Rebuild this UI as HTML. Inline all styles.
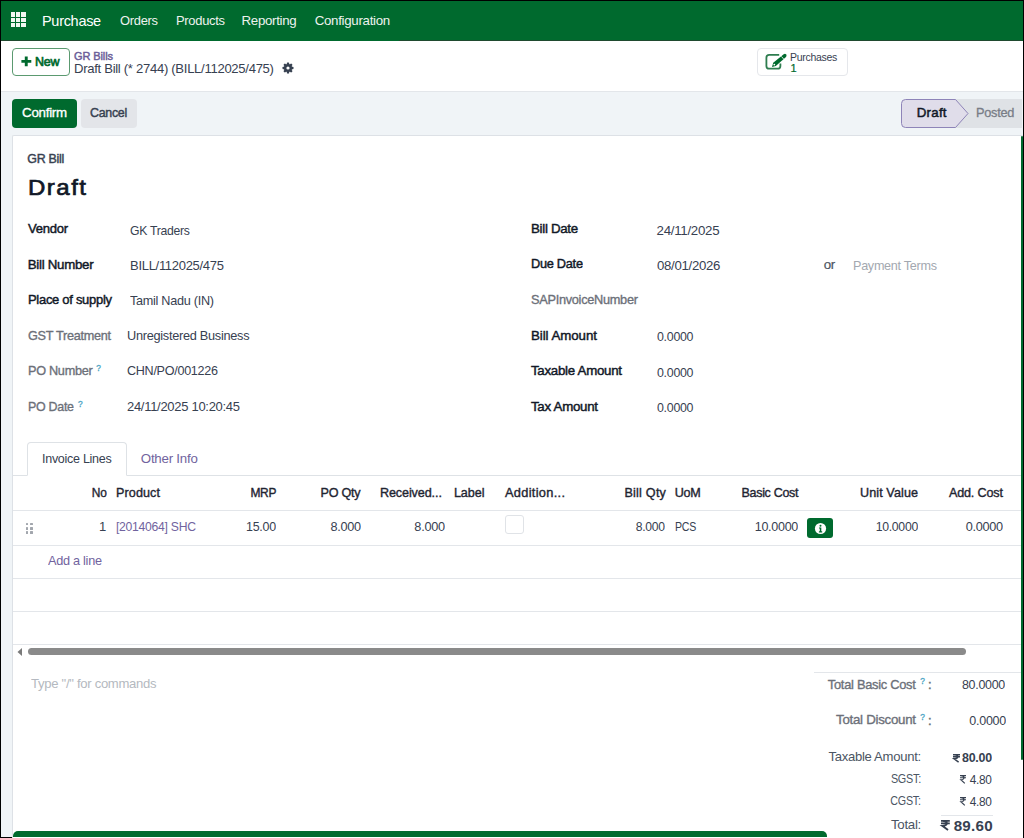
<!DOCTYPE html>
<html><head><meta charset="utf-8"><title>Purchase</title>
<style>
html,body{margin:0;padding:0;width:1024px;height:838px;overflow:hidden;background:#000}
body{position:relative;font-family:"Liberation Sans",sans-serif}
.b{position:absolute;display:block}
.t{position:absolute;white-space:nowrap;line-height:20px;height:20px}
</style></head><body>
<div class="b" style="left:0.00px;top:0.00px;width:1024.00px;height:838.00px;background:#000"></div>
<div class="b" style="left:1.00px;top:1.00px;width:1022.00px;height:836.00px;background:#f0f4f7"></div>
<div class="b" style="left:1.00px;top:1.00px;width:1022.00px;height:40.00px;background:#006a2e"></div>
<div class="b" style="left:1.00px;top:40.00px;width:110.00px;height:1.00px;background:#1f4a2f"></div>
<div class="b" style="left:399.00px;top:40.00px;width:623.00px;height:1.00px;background:#1f4a2f"></div>
<div class="b" style="left:10.60px;top:12.20px;width:4.50px;height:4.50px;background:#f2f6f2"></div>
<div class="b" style="left:10.60px;top:17.50px;width:4.50px;height:4.50px;background:#f2f6f2"></div>
<div class="b" style="left:10.60px;top:22.80px;width:4.50px;height:4.50px;background:#f2f6f2"></div>
<div class="b" style="left:15.90px;top:12.20px;width:4.50px;height:4.50px;background:#f2f6f2"></div>
<div class="b" style="left:15.90px;top:17.50px;width:4.50px;height:4.50px;background:#f2f6f2"></div>
<div class="b" style="left:15.90px;top:22.80px;width:4.50px;height:4.50px;background:#f2f6f2"></div>
<div class="b" style="left:21.20px;top:12.20px;width:4.50px;height:4.50px;background:#f2f6f2"></div>
<div class="b" style="left:21.20px;top:17.50px;width:4.50px;height:4.50px;background:#f2f6f2"></div>
<div class="b" style="left:21.20px;top:22.80px;width:4.50px;height:4.50px;background:#f2f6f2"></div>
<div class="t" style="left:42.00px;top:11.08px;font-size:14.50px;font-weight:normal;color:#ffffff;letter-spacing:-0.300px;">Purchase</div>
<div class="t" style="left:120.20px;top:11.19px;font-size:13.30px;font-weight:normal;color:#eef2ef;letter-spacing:-0.300px;transform:scaleX(0.9707);transform-origin:left;">Orders</div>
<div class="t" style="left:175.50px;top:11.19px;font-size:13.30px;font-weight:normal;color:#eef2ef;letter-spacing:-0.300px;transform:scaleX(0.9725);transform-origin:left;">Products</div>
<div class="t" style="left:241.50px;top:11.19px;font-size:13.30px;font-weight:normal;color:#eef2ef;letter-spacing:-0.300px;">Reporting</div>
<div class="t" style="left:314.70px;top:11.19px;font-size:13.30px;font-weight:normal;color:#eef2ef;letter-spacing:-0.293px;">Configuration</div>
<div class="b" style="left:1.00px;top:41.00px;width:1022.00px;height:50.00px;background:#fff"></div>
<div class="b" style="left:1.00px;top:91.00px;width:1022.00px;height:1.00px;background:#e3e6ea"></div>
<div class="b" style="left:12.00px;top:48.00px;width:58.00px;height:28.00px;border:1px solid #5b9a70;border-radius:4px;box-sizing:border-box;background:#fff"></div>
<svg class="b" style="left:21px;top:56px" width="11" height="12" viewBox="0 0 11 12"><path d="M3.8 0.6h2.9v3.4h3.6v2.8H6.7V10.3H3.8V6.8H0.4V4H3.8z" fill="#006a2e"/></svg>
<div class="t" style="left:35.40px;top:51.59px;font-size:13.30px;font-weight:normal;color:#006a2e;letter-spacing:-0.300px;-webkit-text-stroke:0.70px #006a2e;transform:scaleX(0.9382);transform-origin:left;">New</div>
<div class="t" style="left:74.00px;top:45.69px;font-size:11.00px;font-weight:normal;color:#6b5d98;letter-spacing:-0.104px;-webkit-text-stroke:0.45px #6b5d98;">GR Bills</div>
<div class="t" style="left:74.00px;top:59.19px;font-size:13.30px;font-weight:normal;color:#374151;letter-spacing:-0.300px;transform:scaleX(0.9835);transform-origin:left;">Draft Bill (* 2744) (BILL/112025/475)</div>
<svg class="b" style="left:281.6px;top:62.4px" width="12" height="12" viewBox="-6 -6 12 12">
<g fill="#374151"><circle r="4.1"/><rect x="-1.15" y="-5.5" width="2.3" height="2.6" rx="0.6" transform="rotate(0)"/><rect x="-1.15" y="-5.5" width="2.3" height="2.6" rx="0.6" transform="rotate(45)"/><rect x="-1.15" y="-5.5" width="2.3" height="2.6" rx="0.6" transform="rotate(90)"/><rect x="-1.15" y="-5.5" width="2.3" height="2.6" rx="0.6" transform="rotate(135)"/><rect x="-1.15" y="-5.5" width="2.3" height="2.6" rx="0.6" transform="rotate(180)"/><rect x="-1.15" y="-5.5" width="2.3" height="2.6" rx="0.6" transform="rotate(225)"/><rect x="-1.15" y="-5.5" width="2.3" height="2.6" rx="0.6" transform="rotate(270)"/><rect x="-1.15" y="-5.5" width="2.3" height="2.6" rx="0.6" transform="rotate(315)"/></g><circle r="1.6" fill="#fff"/></svg>
<div class="b" style="left:757.00px;top:48.00px;width:91.00px;height:28.00px;border:1px solid #e5e7eb;border-radius:4px;box-sizing:border-box;background:#fff"></div>
<svg class="b" style="left:765px;top:53px" width="22" height="18" viewBox="0 0 22 18">
<path d="M14.2 1.9H4.2A2.8 2.8 0 0 0 1.4 4.7v8.2A2.8 2.8 0 0 0 4.2 15.7h8.4A2.8 2.8 0 0 0 15.4 12.9V10.5" fill="none" stroke="#2e7d4f" stroke-width="1.8"/>
<path d="M7.0 14.0L8.2 9.7L18.7 1.3Q20.2 0.3 21.2 1.6Q22 2.9 21.0 4.0L10.8 12.9z" fill="#006a2e"/>
<path d="M16.4 3.4L18.9 6.3" stroke="#fff" stroke-width="0.8"/>
<circle cx="9.3" cy="11.6" r="0.9" fill="#fff"/></svg>
<div class="t" style="left:790.00px;top:47.36px;font-size:10.50px;font-weight:normal;color:#374151;letter-spacing:-0.300px;">Purchases</div>
<div class="t" style="left:790.50px;top:58.49px;font-size:11.00px;font-weight:normal;color:#006a2e;letter-spacing:0.000px;-webkit-text-stroke:0.20px #006a2e;">1</div>
<div class="b" style="left:12.00px;top:99.00px;width:65.00px;height:29.00px;background:#006a2e;border-radius:4px"></div>
<div class="t" style="left:22.10px;top:103.19px;font-size:13.30px;font-weight:normal;color:#fff;letter-spacing:-0.260px;-webkit-text-stroke:0.35px #fff;">Confirm</div>
<div class="b" style="left:81.00px;top:99.00px;width:56.00px;height:29.00px;background:#e3e5e9;border-radius:4px"></div>
<div class="t" style="left:90.20px;top:103.19px;font-size:13.30px;font-weight:normal;color:#374151;letter-spacing:-0.300px;-webkit-text-stroke:0.45px #374151;transform:scaleX(0.9323);transform-origin:left;">Cancel</div>
<div class="b" style="left:955.00px;top:99.00px;width:67.00px;height:29.00px;background:#dfe2e6"></div>
<svg class="b" style="left:900px;top:98px" width="72" height="31" viewBox="0 0 72 31">
<path d="M5.5 1.5H55.5L68 15.5L55.5 29.5H5.5A4 4 0 0 1 1.5 25.5V5.5A4 4 0 0 1 5.5 1.5z" fill="#e0ddea" stroke="#8e84b8" stroke-width="1"/></svg>
<div class="t" style="left:916.80px;top:103.19px;font-size:13.30px;font-weight:normal;color:#111827;letter-spacing:0.220px;-webkit-text-stroke:0.50px #111827;">Draft</div>
<div class="t" style="left:975.70px;top:103.19px;font-size:13.30px;font-weight:normal;color:#787d86;letter-spacing:-0.300px;-webkit-text-stroke:0.30px #787d86;transform:scaleX(0.9597);transform-origin:left;">Posted</div>
<div class="b" style="left:12.00px;top:135.00px;width:1011.00px;height:703.00px;background:#fff;border:1px solid #dde1e6;border-radius:2px 0 0 0;box-sizing:border-box;border-bottom:none;border-right:none"></div>
<div class="b" style="left:1021.00px;top:136.00px;width:2.00px;height:624.00px;background:#006a2e;border-radius:1px"></div>
<div class="t" style="left:27.30px;top:148.60px;font-size:12.40px;font-weight:normal;color:#374151;letter-spacing:-0.264px;-webkit-text-stroke:0.45px #374151;">GR Bill</div>
<div class="t" style="left:28.20px;top:177.80px;font-size:22.50px;font-weight:normal;color:#111827;letter-spacing:1.400px;-webkit-text-stroke:0.70px #111827;transform:scaleX(1.0670);transform-origin:left;">Draft</div>
<div class="t" style="left:27.70px;top:219.29px;font-size:13.30px;font-weight:normal;color:#111827;letter-spacing:-0.300px;-webkit-text-stroke:0.45px #111827;transform:scaleX(0.9839);transform-origin:left;">Vendor</div>
<div class="t" style="left:27.70px;top:254.89px;font-size:13.30px;font-weight:normal;color:#111827;letter-spacing:-0.274px;-webkit-text-stroke:0.45px #111827;">Bill Number</div>
<div class="t" style="left:27.70px;top:290.19px;font-size:13.30px;font-weight:normal;color:#111827;letter-spacing:-0.300px;-webkit-text-stroke:0.45px #111827;transform:scaleX(0.9768);transform-origin:left;">Place of supply</div>
<div class="t" style="left:27.50px;top:325.89px;font-size:13.30px;font-weight:normal;color:#6c7079;letter-spacing:-0.300px;-webkit-text-stroke:0.35px #6c7079;transform:scaleX(0.9532);transform-origin:left;">GST Treatment</div>
<div class="t" style="left:27.50px;top:360.99px;font-size:13.30px;font-weight:normal;color:#6c7079;letter-spacing:-0.300px;-webkit-text-stroke:0.35px #6c7079;transform:scaleX(0.9540);transform-origin:left;">PO Number</div>
<div class="t" style="left:27.50px;top:396.99px;font-size:13.30px;font-weight:normal;color:#6c7079;letter-spacing:-0.300px;-webkit-text-stroke:0.35px #6c7079;transform:scaleX(0.9349);transform-origin:left;">PO Date</div>
<div class="t" style="left:96.20px;top:358.02px;font-size:8.30px;font-weight:normal;color:#4aa5c4;letter-spacing:0.000px;-webkit-text-stroke:0.30px #4aa5c4;">?</div>
<div class="t" style="left:78.10px;top:394.02px;font-size:8.30px;font-weight:normal;color:#4aa5c4;letter-spacing:0.000px;-webkit-text-stroke:0.30px #4aa5c4;">?</div>
<div class="t" style="left:130.00px;top:220.89px;font-size:13.30px;font-weight:normal;color:#374151;letter-spacing:-0.300px;transform:scaleX(0.9188);transform-origin:left;">GK Traders</div>
<div class="t" style="left:130.00px;top:256.49px;font-size:13.30px;font-weight:normal;color:#374151;letter-spacing:-0.300px;transform:scaleX(0.9778);transform-origin:left;">BILL/112025/475</div>
<div class="t" style="left:130.00px;top:291.49px;font-size:13.30px;font-weight:normal;color:#374151;letter-spacing:-0.300px;transform:scaleX(0.9526);transform-origin:left;">Tamil Nadu (IN)</div>
<div class="t" style="left:126.60px;top:325.99px;font-size:13.30px;font-weight:normal;color:#374151;letter-spacing:-0.300px;transform:scaleX(0.9592);transform-origin:left;">Unregistered Business</div>
<div class="t" style="left:126.60px;top:361.29px;font-size:13.30px;font-weight:normal;color:#374151;letter-spacing:-0.300px;transform:scaleX(0.9459);transform-origin:left;">CHN/PO/001226</div>
<div class="t" style="left:126.60px;top:396.99px;font-size:13.30px;font-weight:normal;color:#374151;letter-spacing:-0.300px;transform:scaleX(0.9771);transform-origin:left;">24/11/2025 10:20:45</div>
<div class="t" style="left:531.00px;top:218.99px;font-size:13.30px;font-weight:normal;color:#111827;letter-spacing:-0.300px;-webkit-text-stroke:0.45px #111827;">Bill Date</div>
<div class="t" style="left:531.00px;top:254.39px;font-size:13.30px;font-weight:normal;color:#111827;letter-spacing:-0.300px;-webkit-text-stroke:0.45px #111827;transform:scaleX(0.9614);transform-origin:left;">Due Date</div>
<div class="t" style="left:531.00px;top:325.99px;font-size:13.30px;font-weight:normal;color:#111827;letter-spacing:-0.054px;-webkit-text-stroke:0.45px #111827;">Bill Amount</div>
<div class="t" style="left:531.00px;top:361.49px;font-size:13.30px;font-weight:normal;color:#111827;letter-spacing:-0.280px;-webkit-text-stroke:0.45px #111827;">Taxable Amount</div>
<div class="t" style="left:531.00px;top:396.99px;font-size:13.30px;font-weight:normal;color:#111827;letter-spacing:-0.277px;-webkit-text-stroke:0.45px #111827;">Tax Amount</div>
<div class="t" style="left:531.00px;top:289.99px;font-size:13.30px;font-weight:normal;color:#6c7079;letter-spacing:-0.300px;-webkit-text-stroke:0.35px #6c7079;transform:scaleX(0.9591);transform-origin:left;">SAPInvoiceNumber</div>
<div class="t" style="left:656.60px;top:220.89px;font-size:13.30px;font-weight:normal;color:#374151;letter-spacing:-0.287px;">24/11/2025</div>
<div class="t" style="left:656.60px;top:255.99px;font-size:13.30px;font-weight:normal;color:#374151;letter-spacing:-0.300px;transform:scaleX(0.9927);transform-origin:left;">08/01/2026</div>
<div class="t" style="left:656.60px;top:327.49px;font-size:13.30px;font-weight:normal;color:#374151;letter-spacing:-0.300px;transform:scaleX(0.9316);transform-origin:left;">0.0000</div>
<div class="t" style="left:656.60px;top:362.99px;font-size:13.30px;font-weight:normal;color:#374151;letter-spacing:-0.300px;transform:scaleX(0.9316);transform-origin:left;">0.0000</div>
<div class="t" style="left:656.60px;top:398.49px;font-size:13.30px;font-weight:normal;color:#374151;letter-spacing:-0.300px;transform:scaleX(0.9316);transform-origin:left;">0.0000</div>
<div class="t" style="left:823.75px;top:254.59px;font-size:13.30px;font-weight:normal;color:#4b5563;letter-spacing:-0.300px;-webkit-text-stroke:0.20px #4b5563;">or</div>
<div class="t" style="left:853.00px;top:256.29px;font-size:13.30px;font-weight:normal;color:#a3a8b0;letter-spacing:-0.300px;transform:scaleX(0.9486);transform-origin:left;">Payment Terms</div>
<div class="b" style="left:13.00px;top:475.00px;width:1008.00px;height:1.00px;background:#dee2e6"></div>
<div class="b" style="left:27.00px;top:442.00px;width:100.00px;height:34.00px;background:#fff;border:1px solid #dee2e6;border-bottom:1px solid #fff;border-radius:4px 4px 0 0;box-sizing:border-box"></div>
<div class="t" style="left:41.80px;top:449.09px;font-size:13.30px;font-weight:normal;color:#374151;letter-spacing:-0.300px;transform:scaleX(0.9415);transform-origin:left;">Invoice Lines</div>
<div class="t" style="left:140.80px;top:449.09px;font-size:13.30px;font-weight:normal;color:#71639e;letter-spacing:-0.238px;">Other Info</div>
<div class="t" style="right:917.88px;top:483.23px;font-size:12.60px;font-weight:normal;color:#1f2532;letter-spacing:-0.300px;-webkit-text-stroke:0.38px #1f2532;transform:scaleX(0.9489);transform-origin:right;">No</div>
<div class="t" style="left:116.00px;top:483.23px;font-size:12.60px;font-weight:normal;color:#1f2532;letter-spacing:0.096px;-webkit-text-stroke:0.38px #1f2532;">Product</div>
<div class="t" style="right:747.48px;top:483.23px;font-size:12.60px;font-weight:normal;color:#1f2532;letter-spacing:-0.300px;-webkit-text-stroke:0.38px #1f2532;transform:scaleX(0.9489);transform-origin:right;">MRP</div>
<div class="t" style="right:663.66px;top:483.23px;font-size:12.60px;font-weight:normal;color:#1f2532;letter-spacing:-0.261px;-webkit-text-stroke:0.38px #1f2532;">PO Qty</div>
<div class="t" style="right:582.20px;top:483.23px;font-size:12.60px;font-weight:normal;color:#1f2532;letter-spacing:-0.103px;-webkit-text-stroke:0.38px #1f2532;">Received...</div>
<div class="t" style="left:453.90px;top:483.23px;font-size:12.60px;font-weight:normal;color:#1f2532;letter-spacing:-0.033px;-webkit-text-stroke:0.38px #1f2532;">Label</div>
<div class="t" style="left:505.10px;top:483.23px;font-size:12.60px;font-weight:normal;color:#1f2532;letter-spacing:0.300px;-webkit-text-stroke:0.38px #1f2532;transform:scaleX(1.0163);transform-origin:left;">Addition...</div>
<div class="t" style="right:357.87px;top:483.23px;font-size:12.60px;font-weight:normal;color:#1f2532;letter-spacing:0.228px;-webkit-text-stroke:0.38px #1f2532;">Bill Qty</div>
<div class="t" style="left:674.70px;top:483.23px;font-size:12.60px;font-weight:normal;color:#1f2532;letter-spacing:-0.300px;-webkit-text-stroke:0.38px #1f2532;">UoM</div>
<div class="t" style="right:226.30px;top:483.23px;font-size:12.60px;font-weight:normal;color:#1f2532;letter-spacing:-0.300px;-webkit-text-stroke:0.38px #1f2532;transform:scaleX(0.9910);transform-origin:right;">Basic Cost</div>
<div class="t" style="right:105.91px;top:483.23px;font-size:12.60px;font-weight:normal;color:#1f2532;letter-spacing:0.089px;-webkit-text-stroke:0.38px #1f2532;">Unit Value</div>
<div class="t" style="right:21.27px;top:483.23px;font-size:12.60px;font-weight:normal;color:#1f2532;letter-spacing:-0.166px;-webkit-text-stroke:0.38px #1f2532;">Add. Cost</div>
<div class="b" style="left:13.00px;top:510.00px;width:1008.00px;height:1.00px;background:#e3e6ea"></div>
<div class="b" style="left:13.00px;top:545.00px;width:1008.00px;height:1.00px;background:#e3e6ea"></div>
<div class="b" style="left:13.00px;top:578.00px;width:1008.00px;height:1.00px;background:#e3e6ea"></div>
<div class="b" style="left:13.00px;top:611.00px;width:1008.00px;height:1.00px;background:#e3e6ea"></div>
<div class="b" style="left:13.00px;top:644.00px;width:1008.00px;height:1.00px;background:#e3e6ea"></div>
<div class="b" style="left:25.50px;top:522.50px;width:2.70px;height:2.70px;background:#a2a6ad;border-radius:0.5px"></div>
<div class="b" style="left:25.50px;top:526.90px;width:2.70px;height:2.70px;background:#a2a6ad;border-radius:0.5px"></div>
<div class="b" style="left:25.50px;top:531.30px;width:2.70px;height:2.70px;background:#a2a6ad;border-radius:0.5px"></div>
<div class="b" style="left:29.90px;top:522.50px;width:2.70px;height:2.70px;background:#a2a6ad;border-radius:0.5px"></div>
<div class="b" style="left:29.90px;top:526.90px;width:2.70px;height:2.70px;background:#a2a6ad;border-radius:0.5px"></div>
<div class="b" style="left:29.90px;top:531.30px;width:2.70px;height:2.70px;background:#a2a6ad;border-radius:0.5px"></div>
<div class="t" style="right:917.90px;top:517.10px;font-size:13.00px;font-weight:normal;color:#374151;letter-spacing:0.000px;">1</div>
<div class="t" style="left:116.10px;top:516.99px;font-size:13.30px;font-weight:normal;color:#71639e;letter-spacing:-0.300px;transform:scaleX(0.9159);transform-origin:left;">[2014064] SHC</div>
<div class="t" style="right:748.18px;top:516.99px;font-size:13.30px;font-weight:normal;color:#374151;letter-spacing:-0.300px;transform:scaleX(0.9351);transform-origin:right;">15.00</div>
<div class="t" style="right:663.69px;top:516.99px;font-size:13.30px;font-weight:normal;color:#374151;letter-spacing:-0.300px;transform:scaleX(0.9538);transform-origin:right;">8.000</div>
<div class="t" style="right:578.99px;top:516.99px;font-size:13.30px;font-weight:normal;color:#374151;letter-spacing:-0.300px;transform:scaleX(0.9569);transform-origin:right;">8.000</div>
<div class="t" style="right:358.87px;top:516.99px;font-size:13.30px;font-weight:normal;color:#374151;letter-spacing:-0.300px;transform:scaleX(0.9132);transform-origin:right;">8.000</div>
<div class="t" style="right:226.28px;top:516.99px;font-size:13.30px;font-weight:normal;color:#374151;letter-spacing:-0.300px;transform:scaleX(0.9400);transform-origin:right;">10.0000</div>
<div class="t" style="right:106.28px;top:516.99px;font-size:13.30px;font-weight:normal;color:#374151;letter-spacing:-0.300px;transform:scaleX(0.9205);transform-origin:right;">10.0000</div>
<div class="t" style="right:21.29px;top:516.99px;font-size:13.30px;font-weight:normal;color:#374151;letter-spacing:-0.300px;transform:scaleX(0.9546);transform-origin:right;">0.0000</div>
<div class="t" style="left:674.70px;top:516.99px;font-size:13.30px;font-weight:normal;color:#374151;letter-spacing:-0.300px;transform:scaleX(0.7963);transform-origin:left;">PCS</div>
<div class="b" style="left:505.00px;top:515.00px;width:19.00px;height:19.00px;border:1px solid #e0e3e7;border-radius:3px;box-sizing:border-box;background:#fff"></div>
<div class="b" style="left:807.00px;top:518.00px;width:26.00px;height:20.00px;background:#006a2e;border-radius:3px"></div>
<svg class="b" style="left:813.5px;top:521.5px" width="13" height="13" viewBox="0 0 13 13">
<circle cx="6.5" cy="6.5" r="5.6" fill="#fff"/><circle cx="6.5" cy="3.8" r="1.0" fill="#006a2e"/><path d="M5 5.4h2.3v3.9h0.9v1.1H4.9V9.3h0.9V6.5H5z" fill="#006a2e"/></svg>
<div class="t" style="left:47.70px;top:551.49px;font-size:13.30px;font-weight:normal;color:#71639e;letter-spacing:-0.300px;transform:scaleX(0.9565);transform-origin:left;">Add a line</div>
<svg class="b" style="left:16px;top:647px" width="8" height="10" viewBox="0 0 8 10"><path d="M6 1L1.5 5L6 9z" fill="#7a7a7a"/></svg>
<div class="b" style="left:28.40px;top:647.60px;width:937.40px;height:7.80px;background:#8a8a8a;border-radius:4px"></div>
<div class="t" style="left:30.60px;top:674.39px;font-size:13.30px;font-weight:normal;color:#b4b9c0;letter-spacing:-0.300px;transform:scaleX(0.9841);transform-origin:left;">Type &quot;/&quot; for commands</div>
<div class="b" style="left:813.60px;top:672.00px;width:207.00px;height:1.00px;background:#e3e6ea"></div>
<div class="t" style="right:108.29px;top:674.59px;font-size:13.30px;font-weight:normal;color:#6c7079;letter-spacing:-0.300px;-webkit-text-stroke:0.35px #6c7079;transform:scaleX(0.9686);transform-origin:right;">Total Basic Cost</div>
<div class="t" style="left:920.30px;top:670.72px;font-size:8.30px;font-weight:normal;color:#4aa5c4;letter-spacing:0.000px;-webkit-text-stroke:0.30px #4aa5c4;">?</div>
<div class="t" style="left:928.00px;top:674.70px;font-size:13.00px;font-weight:normal;color:#6c7079;letter-spacing:0.000px;-webkit-text-stroke:0.45px #6c7079;">:</div>
<div class="t" style="right:18.58px;top:674.99px;font-size:13.30px;font-weight:normal;color:#374151;letter-spacing:-0.300px;transform:scaleX(0.9357);transform-origin:right;">80.0000</div>
<div class="t" style="right:108.27px;top:710.49px;font-size:13.30px;font-weight:normal;color:#6c7079;letter-spacing:-0.272px;-webkit-text-stroke:0.35px #6c7079;">Total Discount</div>
<div class="t" style="left:920.30px;top:706.72px;font-size:8.30px;font-weight:normal;color:#4aa5c4;letter-spacing:0.000px;-webkit-text-stroke:0.30px #4aa5c4;">?</div>
<div class="t" style="left:928.00px;top:710.60px;font-size:13.00px;font-weight:normal;color:#6c7079;letter-spacing:0.000px;-webkit-text-stroke:0.45px #6c7079;">:</div>
<div class="t" style="right:18.58px;top:710.99px;font-size:13.30px;font-weight:normal;color:#374151;letter-spacing:-0.300px;transform:scaleX(0.9392);transform-origin:right;">0.0000</div>
<div class="t" style="right:103.00px;top:747.09px;font-size:13.30px;font-weight:normal;color:#4b5563;letter-spacing:-0.300px;transform:scaleX(0.9847);transform-origin:right;">Taxable Amount:</div>
<div class="t" style="right:102.94px;top:768.99px;font-size:13.30px;font-weight:normal;color:#4b5563;letter-spacing:-0.300px;transform:scaleX(0.8138);transform-origin:right;">SGST:</div>
<div class="t" style="right:102.94px;top:790.79px;font-size:13.30px;font-weight:normal;color:#4b5563;letter-spacing:-0.300px;transform:scaleX(0.8060);transform-origin:right;">CGST:</div>
<div class="t" style="right:103.00px;top:814.59px;font-size:13.30px;font-weight:normal;color:#4b5563;letter-spacing:-0.298px;">Total:</div>
<div class="t" style="right:31.98px;top:748.29px;font-size:13.30px;font-weight:bold;color:#374151;letter-spacing:-0.300px;transform:scaleX(0.9351);transform-origin:right;">80.00</div>
<svg class="b" style="left:952.60px;top:753.80px;overflow:visible" width="7.00" height="8.70" viewBox="0 0 7.000 8.700" preserveAspectRatio="none"><path d="M0 0.750H7.000M0 2.784H7.000M1.050 0.750C5.950 0.750 5.950 4.785 1.050 4.785L5.600 8.200" fill="none" stroke="#374151" stroke-width="1.50"/></svg>
<div class="t" style="right:31.97px;top:769.89px;font-size:13.30px;font-weight:normal;color:#374151;letter-spacing:-0.300px;transform:scaleX(0.8925);transform-origin:right;">4.80</div>
<svg class="b" style="left:960.20px;top:775.20px;overflow:visible" width="6.00" height="8.70" viewBox="0 0 6.000 8.700" preserveAspectRatio="none"><path d="M0 0.575H6.000M0 2.784H6.000M0.900 0.575C5.100 0.575 5.100 4.785 0.900 4.785L4.800 8.317" fill="none" stroke="#374151" stroke-width="1.15"/></svg>
<div class="t" style="right:31.97px;top:791.59px;font-size:13.30px;font-weight:normal;color:#374151;letter-spacing:-0.300px;transform:scaleX(0.8925);transform-origin:right;">4.80</div>
<svg class="b" style="left:960.20px;top:796.90px;overflow:visible" width="6.00" height="8.70" viewBox="0 0 6.000 8.700" preserveAspectRatio="none"><path d="M0 0.575H6.000M0 2.784H6.000M0.900 0.575C5.100 0.575 5.100 4.785 0.900 4.785L4.800 8.317" fill="none" stroke="#374151" stroke-width="1.15"/></svg>
<div class="b" style="left:940.50px;top:815.00px;width:52.00px;height:1.00px;background:#e3e6ea"></div>
<div class="t" style="right:31.16px;top:816.03px;font-size:15.20px;font-weight:bold;color:#374151;letter-spacing:0.241px;">89.60</div>
<svg class="b" style="left:940.80px;top:820.20px;overflow:visible" width="8.80" height="10.60" viewBox="0 0 8.800 10.600" preserveAspectRatio="none"><path d="M0 0.900H8.800M0 3.392H8.800M1.320 0.900C7.480 0.900 7.480 5.830 1.320 5.830L7.040 10.000" fill="none" stroke="#374151" stroke-width="1.80"/></svg>
<div class="b" style="left:13.00px;top:831.00px;width:814.00px;height:6.00px;background:#006a2e;border-radius:5px 5px 0 0"></div>
</body></html>
